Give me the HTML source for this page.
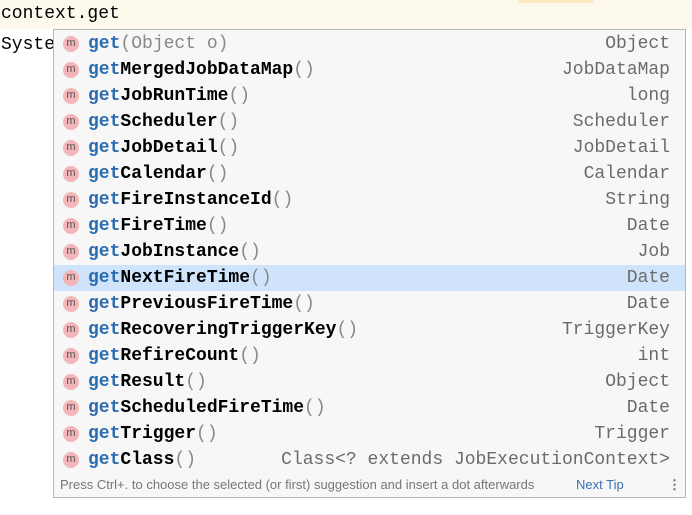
<!DOCTYPE html>
<html><head><style>
body{margin:0;width:692px;height:515px;background:#fff;position:relative;overflow:hidden;font-family:"Liberation Mono",monospace;}
.l1{position:absolute;left:0;top:0;width:692px;height:29px;background:#fdf9ec;}
.hl{position:absolute;left:518px;top:0;width:76px;height:3px;background:#fbe9c4;}
.t{position:absolute;left:1px;font-size:18px;color:#000;}
.pop{position:absolute;left:53px;top:29px;width:631px;height:467px;background:#f7f7f7;border:1px solid #b8b8b8;}
.row{position:absolute;left:0;width:631px;height:26px;font-size:18px;line-height:26px;}
.row.sel{background:#cfe4fb;}
.ic{position:absolute;left:9px;top:5px;width:16px;height:16px;border-radius:50%;background:#f3b5b8;font-size:11px;line-height:15px;text-align:center;color:#555;font-family:"Liberation Sans",sans-serif;}
.n{position:absolute;left:34px;top:0;color:#000;font-weight:bold;}
.n b{color:#2a6cb0;}
.n i{font-style:normal;font-weight:normal;color:#888;}
.ty{position:absolute;right:15px;top:0;color:#6b6b6b;}
.foot{position:absolute;left:0;top:443px;width:631px;height:24px;font-family:"Liberation Sans",sans-serif;font-size:13px;color:#777;line-height:24px;}
.foot span{color:#3d6fb4;}
</style></head><body>
<div class="l1"></div><div class="hl"></div>
<div class="t" style="top:4px">context.get</div>
<div class="t" style="top:35px">Syste</div>
<div class="pop">
<div class="row" style="top:1px"><div class="ic">m</div><div class="n"><b>get</b><i>(Object o)</i></div><div class="ty">Object</div></div>
<div class="row" style="top:27px"><div class="ic">m</div><div class="n"><b>get</b>MergedJobDataMap<i>()</i></div><div class="ty">JobDataMap</div></div>
<div class="row" style="top:53px"><div class="ic">m</div><div class="n"><b>get</b>JobRunTime<i>()</i></div><div class="ty">long</div></div>
<div class="row" style="top:79px"><div class="ic">m</div><div class="n"><b>get</b>Scheduler<i>()</i></div><div class="ty">Scheduler</div></div>
<div class="row" style="top:105px"><div class="ic">m</div><div class="n"><b>get</b>JobDetail<i>()</i></div><div class="ty">JobDetail</div></div>
<div class="row" style="top:131px"><div class="ic">m</div><div class="n"><b>get</b>Calendar<i>()</i></div><div class="ty">Calendar</div></div>
<div class="row" style="top:157px"><div class="ic">m</div><div class="n"><b>get</b>FireInstanceId<i>()</i></div><div class="ty">String</div></div>
<div class="row" style="top:183px"><div class="ic">m</div><div class="n"><b>get</b>FireTime<i>()</i></div><div class="ty">Date</div></div>
<div class="row" style="top:209px"><div class="ic">m</div><div class="n"><b>get</b>JobInstance<i>()</i></div><div class="ty">Job</div></div>
<div class="row sel" style="top:235px"><div class="ic">m</div><div class="n"><b>get</b>NextFireTime<i>()</i></div><div class="ty">Date</div></div>
<div class="row" style="top:261px"><div class="ic">m</div><div class="n"><b>get</b>PreviousFireTime<i>()</i></div><div class="ty">Date</div></div>
<div class="row" style="top:287px"><div class="ic">m</div><div class="n"><b>get</b>RecoveringTriggerKey<i>()</i></div><div class="ty">TriggerKey</div></div>
<div class="row" style="top:313px"><div class="ic">m</div><div class="n"><b>get</b>RefireCount<i>()</i></div><div class="ty">int</div></div>
<div class="row" style="top:339px"><div class="ic">m</div><div class="n"><b>get</b>Result<i>()</i></div><div class="ty">Object</div></div>
<div class="row" style="top:365px"><div class="ic">m</div><div class="n"><b>get</b>ScheduledFireTime<i>()</i></div><div class="ty">Date</div></div>
<div class="row" style="top:391px"><div class="ic">m</div><div class="n"><b>get</b>Trigger<i>()</i></div><div class="ty">Trigger</div></div>
<div class="row" style="top:417px"><div class="ic">m</div><div class="n"><b>get</b>Class<i>()</i></div><div class="ty">Class&lt;? extends JobExecutionContext&gt;</div></div>
<div class="foot"><span style="color:#777;position:absolute;left:6px">Press Ctrl+. to choose the selected (or first) suggestion and insert a dot afterwards</span><span style="position:absolute;left:522px">Next Tip</span><span style="position:absolute;left:614px;color:#666;font-weight:bold">&#8942;</span></div>
</div>
</body></html>
